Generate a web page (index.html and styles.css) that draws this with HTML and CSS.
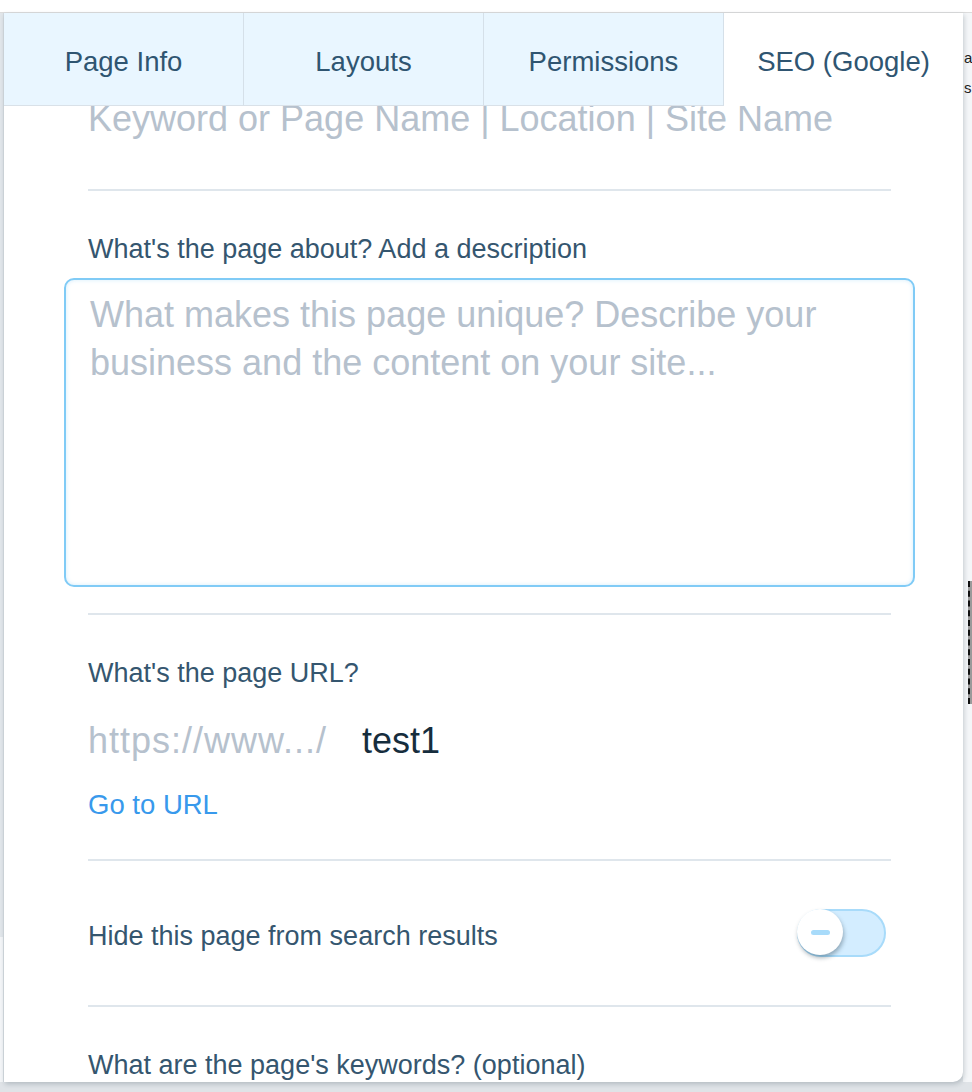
FILE: index.html
```html
<!DOCTYPE html>
<html lang="en">
<head>
    <meta charset="UTF-8">
    <title>Page Settings - SEO</title>
    <link rel="stylesheet" href="styles.css">
</head>
<body>
<div class="topbar"></div>
<div class="stage">
    <div class="edge-left"></div>

    <!--settings panel-->
    <div class="panel">
        <nav class="tabs">
            <div class="tab">Page Info</div>
            <div class="tab">Layouts</div>
            <div class="tab">Permissions</div>
            <div class="tab active">SEO (Google)</div>
        </nav>

        <div class="content">
            <input class="big-input title-input" placeholder="Keyword or Page Name | Location | Site Name">
            <div class="rule rule-title"></div>

            <p class="label">What's the page about? Add a description</p>
            <textarea class="desc" placeholder="What makes this page unique? Describe your business and the content on your site..."></textarea>
            <div class="rule rule-desc"></div>

            <p class="label">What's the page URL?</p>
            <div class="url-row">
                <span class="url-prefix">https://www.../</span>
                <span class="url-slug">test1</span>
            </div>
            <a class="go-url" href="#">Go to URL</a>
            <div class="rule rule-url"></div>

            <div class="hide-row">
                <span class="hide-text">Hide this page from search results</span>
                <div class="toggle"><div class="knob"></div></div>
            </div>
            <div class="rule"></div>

            <p class="label">What are the page's keywords? (optional)</p>
        </div>
    </div>

    <!--page behind the panel-->
    <div class="edge-right">
        <span class="peek">a</span>
        <span class="peek">s</span>
        <div class="dash"></div>
    </div>
</div>
</body>
</html>
```

FILE: styles.css
```css
body {
    margin: 0;
    padding: 0;
    background: #fff;
    font-family: "Liberation Sans", Arial, sans-serif;
}

.topbar {
    height: 12px;
    border-bottom: 1px solid #dcdcdc;
}

.stage {
    display: flex;
    height: 1079px;
    background: #dfe3e7;
}

.edge-left {
    width: 3px;
    height: 1069px;
    border-right: 1px solid #d6dce1;
    background: linear-gradient(#e1e6ea 0, #e1e6ea 924px, #f3f5f7 924px);
}

.panel {
    width: 959px;
    height: 1069px;
    background: #fff;
    border-bottom-right-radius: 10px;
    box-shadow: 1px 2px 5px rgba(22, 45, 61, 0.22);
    overflow: hidden;
    display: flex;
    flex-direction: column;
    position: relative;
    z-index: 1;
}

.tabs {
    display: flex;
    height: 93px;
    flex: none;
}

.tab {
    box-sizing: border-box;
    width: 240px;
    padding-top: 6px;
    display: flex;
    align-items: center;
    justify-content: center;
    background: #e9f6ff;
    border-right: 1px solid #d5e0e9;
    border-bottom: 1px solid #d9e1e8;
    color: #2f5571;
    font-size: 27.5px;
}

.tab.active {
    width: 239px;
    background: #fff;
    border-right: none;
    border-bottom-color: #fff;
}

.content {
    flex: 1;
    overflow: hidden;
    padding: 0 72px 0 84px;
    display: flex;
    flex-direction: column;
}

.big-input {
    font-family: inherit;
    font-size: 36px;
    border: none;
    outline: none;
    padding: 0;
    color: #162d3d;
}

.big-input::placeholder,
.desc::placeholder {
    color: #b6c1cd;
}

.title-input {
    margin-top: -11px;
    height: 48px;
    width: 100%;
    flex: none;
}

.rule {
    height: 2px;
    flex: none;
    background: #dfe6ec;
}

.rule-title {
    margin-top: 46px;
}

.label {
    margin: 40px 0 0;
    height: 34px;
    line-height: 36px;
    font-size: 27px;
    color: #35566f;
}

.desc {
    box-sizing: border-box;
    margin: 13px -24px 0;
    height: 309px;
    flex: none;
    padding: 11px 24px;
    border: 2px solid #80cbf6;
    border-radius: 10px;
    box-shadow: inset 0 0 4px rgba(128, 203, 246, 0.35);
    font-family: inherit;
    font-size: 36px;
    line-height: 48px;
    resize: none;
    outline: none;
    color: #162d3d;
}

.rule-desc {
    margin-top: 26px;
}

.url-row {
    margin-top: 27px;
    height: 48px;
    line-height: 50px;
    display: flex;
    gap: 35px;
    font-size: 36px;
}

.url-prefix {
    color: #b6c1cd;
    letter-spacing: 1px;
}

.url-slug {
    color: #162d3d;
}

.go-url {
    margin-top: 23px;
    height: 34px;
    line-height: 36px;
    font-size: 27.5px;
    color: #3899ec;
    text-decoration: none;
    align-self: flex-start;
}

.rule-url {
    margin-top: 38px;
}

.hide-row {
    height: 144px;
    flex: none;
    display: flex;
    align-items: center;
    justify-content: space-between;
}

.hide-text {
    padding-top: 6px;
    line-height: 34px;
    font-size: 27px;
    color: #35566f;
}

.toggle {
    box-sizing: border-box;
    width: 89px;
    height: 48px;
    margin-right: 5px;
    border: 2px solid #a8dbfa;
    border-radius: 24px;
    background: #d3edff;
    position: relative;
}

.knob {
    position: absolute;
    left: -2px;
    top: -2px;
    width: 46px;
    height: 46px;
    border-radius: 50%;
    background: #fff;
    box-shadow: 1px 3px 4px rgba(22, 45, 61, 0.35);
    display: flex;
    align-items: center;
    justify-content: center;
}

.knob::before {
    content: "";
    width: 19px;
    height: 5px;
    border-radius: 3px;
    background: #a8dbfa;
}

.edge-right {
    flex: 1;
    height: 1069px;
    background: #f4f6f8;
    overflow: hidden;
    display: flex;
    flex-direction: column;
    padding-left: 1px;
}

.peek {
    font-size: 15px;
    line-height: 30px;
    color: #222;
}

.peek:first-child {
    margin-top: 30px;
}

.dash {
    margin: 478px 0 0 4px;
    width: 3px;
    height: 123px;
    border-left: 2px dashed #111;
    background: #9a9a9a;
}
```
